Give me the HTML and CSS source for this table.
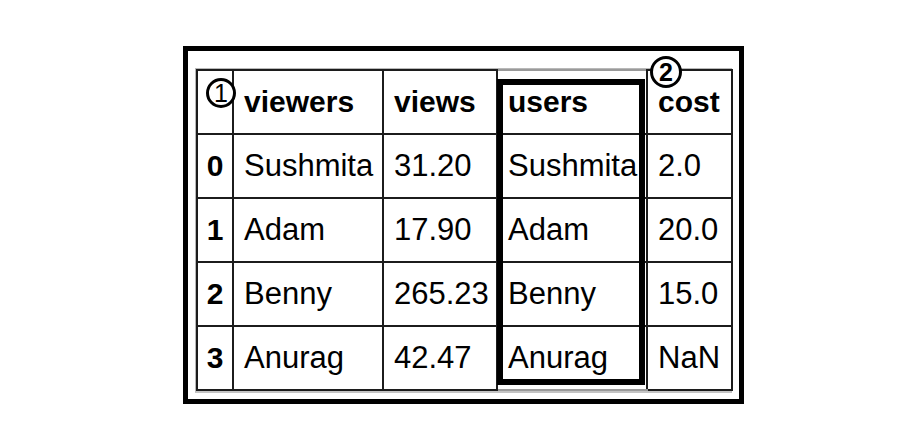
FILE: index.html
```html
<!DOCTYPE html>
<html>
<head>
<meta charset="utf-8">
<link rel="stylesheet" href="styles.css">
</head>
<body>
<div class="frame">
  <div class="wrap">
    <table class="df">
      <colgroup>
        <col class="c-idx">
        <col class="c-viewers">
        <col class="c-views">
        <col class="c-users">
        <col class="c-cost">
      </colgroup>
      <thead>
        <tr>
          <th class="idx"></th>
          <th>viewers</th>
          <th>views</th>
          <th class="u-top">users</th>
          <th>cost</th>
        </tr>
      </thead>
      <tbody>
        <tr><th class="idx">0</th><td>Sushmita</td><td>31.20</td><td>Sushmita</td><td>2.0</td></tr>
        <tr><th class="idx">1</th><td>Adam</td><td>17.90</td><td>Adam</td><td>20.0</td></tr>
        <tr><th class="idx">2</th><td>Benny</td><td>265.23</td><td>Benny</td><td>15.0</td></tr>
        <tr><th class="idx">3</th><td>Anurag</td><td>42.47</td><td class="u-bot">Anurag</td><td>NaN</td></tr>
      </tbody>
    </table>
  </div>
  <div class="highlight"></div>
  <div class="badge badge-1">1</div>
  <div class="badge badge-2">2</div>
</div>
</body>
</html>
```

FILE: styles.css
```css
html, body {
  margin: 0;
  padding: 0;
  background: #ffffff;
}

body {
  font-family: "Liberation Sans", Arial, sans-serif;
  color: #000000;
}

.frame {
  position: relative;
  width: 537px;
  margin: 46px 0 0 183px;
  padding: 17px 7px 6px 7px;
  box-sizing: content-box;
  border: 5px solid #000000;
  background: #ffffff;
}

.wrap {
  border-top: 1px solid #b8b8b8;
  border-left: 1px solid #b8b8b8;
  border-right: 1px solid #b8b8b8;
  border-bottom: 2px solid #c4c4c4;
  width: 535px;
}

.df {
  width: 535px;
  table-layout: fixed;
  border-collapse: collapse;
  font-size: 31px;
}

.c-idx { width: 36px; }
.c-viewers { width: 150px; }
.c-views { width: 114px; }
.c-users { width: 150px; }
.c-cost { width: 85px; }

.df th,
.df td {
  border: 2px solid #1c1c1c;
  height: 62px;
  padding: 0 0 0 10px;
  text-align: left;
  vertical-align: middle;
  white-space: nowrap;
  overflow: visible;
  font-weight: normal;
}

.df thead th {
  font-weight: bold;
  font-size: 30px;
}

.df th.idx {
  padding: 0;
  text-align: center;
  font-weight: bold;
  font-size: 30px;
}

.df th.u-top {
  border-top-color: #9a9a9a;
}

.df td.u-bot {
  border-bottom-color: #9a9a9a;
}

.highlight {
  position: absolute;
  left: 309px;
  top: 28px;
  width: 148px;
  height: 306px;
  box-sizing: border-box;
  border: 6px solid #000000;
  pointer-events: none;
}

.badge {
  position: absolute;
  box-sizing: border-box;
  border: 3px solid #000000;
  border-radius: 50%;
  background: #ffffff;
  display: flex;
  align-items: center;
  justify-content: center;
  color: #000000;
  font-family: "Liberation Sans", Arial, sans-serif;
  line-height: 1;
}

.badge-1 {
  left: 18px;
  top: 27px;
  width: 30px;
  height: 30px;
  font-size: 25px;
  font-weight: normal;
}

.badge-2 {
  left: 462px;
  top: 5px;
  width: 32px;
  height: 32px;
  font-size: 25px;
  font-weight: bold;
}
```
